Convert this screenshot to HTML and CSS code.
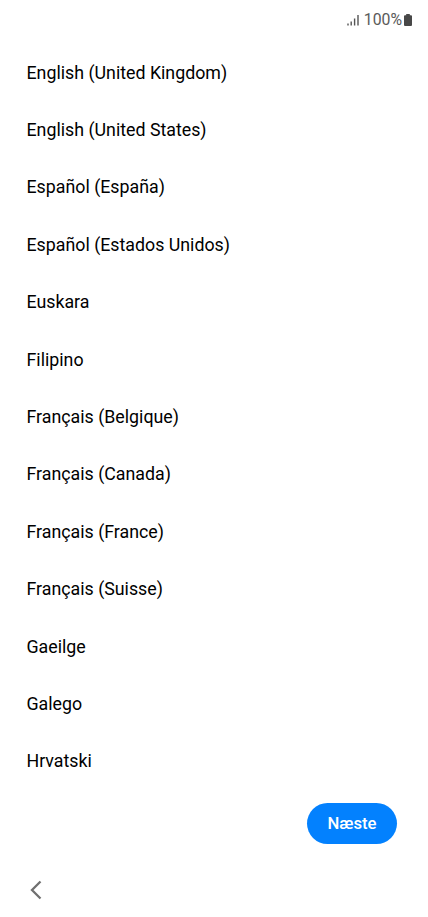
FILE: index.html
```html
<!DOCTYPE html>
<html lang="da">
<head>
  <meta charset="UTF-8" />
  <meta name="viewport" content="width=device-width, initial-scale=1.0"/>
  <title>Vælg sprog</title>
  <link rel="stylesheet" href="styles.css">
</head>
<body>
  <header class="status-bar">
    <svg class="signal" width="12" height="12" viewBox="0 0 12 12">
      <path d="M1 9.500v2M4.200 7.500v4M7.600 4.500v7M11 1v10.500" />
    </svg>
    <span class="percent">100%</span>
    <svg class="battery" width="8" height="12" viewBox="0 0 8 12">
      <path d="M2.200 0h3.600v1.200h1.200a1 1 0 0 1 1 1v8.800a1 1 0 0 1-1 1h-6a1 1 0 0 1-1-1v-8.800a1 1 0 0 1 1-1h1.200z" />
    </svg>
  </header>

  <main>
    <ul class="languages">
      <li>English (United Kingdom)</li>
      <li>English (United States)</li>
      <li>Español (España)</li>
      <li>Español (Estados Unidos)</li>
      <li>Euskara</li>
      <li>Filipino</li>
      <li>Français (Belgique)</li>
      <li>Français (Canada)</li>
      <li>Français (France)</li>
      <li>Français (Suisse)</li>
      <li>Gaeilge</li>
      <li>Galego</li>
      <li>Hrvatski</li>
    </ul>
    <div class="actions">
      <button class="next">Næste</button>
    </div>
  </main>

  <nav class="nav-bar">
    <svg class="back" width="12" height="20" viewBox="0 0 12 20">
      <path d="M10.500 1.500L2 10l8.500 8.500" />
    </svg>
  </nav>
</body>
</html>
```

FILE: styles.css
```css
body {
  font-family: Roboto, sans-serif;
  background-color: #fff;
  color: #000;
  margin: 0;
  height: 917px;
  overflow: hidden;
}

.status-bar {
  display: flex;
  justify-content: flex-end;
  align-items: center;
  height: 39px;
  padding-right: 16px;
  box-sizing: border-box;
  color: #5a5a5a;
}

.signal {
  margin-top: 1px;
  fill: none;
  stroke: #555;
  stroke-width: 1.4;
}

.percent {
  margin: 0 2px 0 5px;
  font-size: 15.8px;
}

.battery {
  fill: #484848;
}

.languages {
  list-style: none;
  margin: 0;
  padding: 4.5px 0 0 26.5px;
}

.languages li {
  height: 57.42px;
  line-height: 57.42px;
  font-size: 17.8px;
}

.actions {
  display: flex;
  justify-content: flex-end;
  padding: 13px 31px 0 0;
}

.next {
  width: 90px;
  height: 41px;
  padding: 1px 0 0;
  border: none;
  border-radius: 21px;
  background-color: #0381fe;
  color: #fff;
  font-family: inherit;
  font-size: 16.7px;
  font-weight: 500;
}

.nav-bar {
  padding: 36px 0 0 30px;
}

.back {
  display: block;
  fill: none;
  stroke: #707070;
  stroke-width: 2.3;
}
```
